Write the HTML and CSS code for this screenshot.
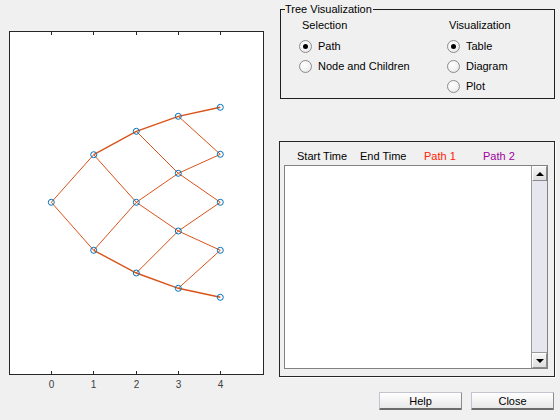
FILE: index.html
```html
<!DOCTYPE html>
<html>
<head>
<meta charset="utf-8">
<link rel="stylesheet" href="styles.css">
</head>
<body>
<div class="app">
  <div class="plot">
    <svg width="279" height="420" viewBox="0 0 279 420">
      <rect x="9.5" y="31.5" width="254" height="343" fill="#ffffff" stroke="#262626" stroke-width="1"/>
      <g stroke="#262626" stroke-width="1">
        <line x1="51.5" y1="31.5" x2="51.5" y2="35"/>
        <line x1="93.5" y1="31.5" x2="93.5" y2="35"/>
        <line x1="136.5" y1="31.5" x2="136.5" y2="35"/>
        <line x1="178.5" y1="31.5" x2="178.5" y2="35"/>
        <line x1="220.5" y1="31.5" x2="220.5" y2="35"/>
        <line x1="51.5" y1="374.5" x2="51.5" y2="371"/>
        <line x1="93.5" y1="374.5" x2="93.5" y2="371"/>
        <line x1="136.5" y1="374.5" x2="136.5" y2="371"/>
        <line x1="178.5" y1="374.5" x2="178.5" y2="371"/>
        <line x1="220.5" y1="374.5" x2="220.5" y2="371"/>
      </g>
      <g class="ticklabels">
        <text x="51.5" y="388">0</text>
        <text x="93.5" y="388">1</text>
        <text x="136.5" y="388">2</text>
        <text x="178.5" y="388">3</text>
        <text x="220.5" y="388">4</text>
      </g>
      <g fill="none" stroke="#D95319" stroke-width="1">
        <line x1="51.3" y1="202.3" x2="93.7" y2="154.7"/>
        <line x1="51.3" y1="202.3" x2="93.7" y2="250.3"/>
        <line x1="93.7" y1="154.7" x2="136.3" y2="202.3"/>
        <line x1="93.7" y1="250.3" x2="136.3" y2="202.3"/>
        <line x1="136.3" y1="131.3" x2="178.3" y2="173.3"/>
        <line x1="136.3" y1="202.3" x2="178.3" y2="173.3"/>
        <line x1="136.3" y1="202.3" x2="178.3" y2="231"/>
        <line x1="136.3" y1="273" x2="178.3" y2="231"/>
        <line x1="178.3" y1="116.3" x2="220.3" y2="154.3"/>
        <line x1="178.3" y1="173.3" x2="220.3" y2="154.3"/>
        <line x1="178.3" y1="173.3" x2="220.3" y2="202.3"/>
        <line x1="178.3" y1="231" x2="220.3" y2="202.3"/>
        <line x1="178.3" y1="231" x2="220.3" y2="250.3"/>
        <line x1="178.3" y1="288.3" x2="220.3" y2="250.3"/>
      </g>
      <g fill="none" stroke="#D95319" stroke-width="1.4">
        <polyline points="93.7,154.7 136.3,131.3 178.3,116.3 220.3,107.3"/>
        <polyline points="93.7,250.3 136.3,273 178.3,288.3 220.3,297.3"/>
      </g>
      <g fill="none" stroke="#0072BD" stroke-width="1">
        <circle cx="51.3" cy="202.3" r="3"/>
        <circle cx="93.7" cy="154.7" r="3"/>
        <circle cx="93.7" cy="250.3" r="3"/>
        <circle cx="136.3" cy="131.3" r="3"/>
        <circle cx="136.3" cy="202.3" r="3"/>
        <circle cx="136.3" cy="273" r="3"/>
        <circle cx="178.3" cy="116.3" r="3"/>
        <circle cx="178.3" cy="173.3" r="3"/>
        <circle cx="178.3" cy="231" r="3"/>
        <circle cx="178.3" cy="288.3" r="3"/>
        <circle cx="220.3" cy="107.3" r="3"/>
        <circle cx="220.3" cy="154.3" r="3"/>
        <circle cx="220.3" cy="202.3" r="3"/>
        <circle cx="220.3" cy="250.3" r="3"/>
        <circle cx="220.3" cy="297.3" r="3"/>
      </g>
    </svg>
  </div>
  <div class="side">
    <fieldset class="group">
      <legend>Tree Visualization</legend>
      <div class="cols">
        <div class="col col-sel">
          <div class="colhead">Selection</div>
          <div class="radio"><span class="dot on"></span>Path</div>
          <div class="radio"><span class="dot"></span>Node and Children</div>
        </div>
        <div class="col col-vis">
          <div class="colhead">Visualization</div>
          <div class="radio"><span class="dot on"></span>Table</div>
          <div class="radio"><span class="dot"></span>Diagram</div>
          <div class="radio"><span class="dot"></span>Plot</div>
        </div>
      </div>
    </fieldset>
    <div class="panel">
      <div class="thead">
        <span>Start Time</span>
        <span>End Time</span>
        <span class="p1">Path 1</span>
        <span class="p2">Path 2</span>
      </div>
      <div class="list">
        <div class="list-body"></div>
        <div class="scroll">
          <div class="sbtn"><span class="arr up"></span></div>
          <div class="track"></div>
          <div class="sbtn"><span class="arr down"></span></div>
        </div>
      </div>
    </div>
    <div class="buttons">
      <button class="btn">Help</button>
      <button class="btn">Close</button>
    </div>
  </div>
</div>
</body>
</html>
```
FILE: styles.css
```css
html, body {
  margin: 0;
  padding: 0;
  background: #f0f0f0;
}
body {
  font-family: "Liberation Sans", Arial, sans-serif;
  font-size: 11px;
  color: #000;
}
.app {
  display: flex;
  width: 560px;
  height: 420px;
}
.plot {
  width: 279px;
  flex: none;
}
.plot svg {
  display: block;
}
.ticklabels text {
  font-family: "Liberation Sans", Arial, sans-serif;
  font-size: 10px;
  fill: #404040;
  text-anchor: middle;
}
.side {
  width: 276px;
  display: flex;
  flex-direction: column;
}
.group {
  margin: 3px 0 0 1px;
  padding: 0 0 2px 0;
  border: 1px solid #1e1e1e;
  box-sizing: border-box;
  width: 275px;
  min-width: 0;
}
.group legend {
  margin-left: 4px;
  padding: 0 1px 0 0;
  line-height: 13px;
  font-size: 11px;
}
.cols {
  display: flex;
  padding-top: 3px;
}
.col-sel {
  width: 166px;
  padding-left: 18px;
  box-sizing: border-box;
}
.colhead {
  line-height: 13px;
  padding-left: 3px;
  margin-bottom: 4px;
}
.col-vis .colhead {
  padding-left: 2px;
}
.radio {
  height: 20px;
  display: flex;
  align-items: center;
  line-height: 13px;
}
.dot {
  width: 11px;
  height: 11px;
  border-radius: 50%;
  border: 1px solid #8c8c8c;
  background: radial-gradient(circle at 40% 35%, #ffffff 0%, #f4f4f4 50%, #dcdcdc 100%);
  margin-right: 6px;
  position: relative;
  flex: none;
}
.dot.on::after {
  content: "";
  position: absolute;
  left: 3px;
  top: 3px;
  width: 5px;
  height: 5px;
  border-radius: 50%;
  background: #000;
}
.panel {
  margin-top: 42px;
  border: 1px solid #262626;
  box-shadow: 1px 1px 0 #ffffff;
  height: 236px;
  box-sizing: border-box;
  display: flex;
  flex-direction: column;
}
.thead {
  display: grid;
  grid-template-columns: 63px 64px 59px auto;
  padding: 8px 0 2px 17px;
  line-height: 13px;
  white-space: nowrap;
}
.p1 { color: #ff2200; }
.p2 { color: #a000a0; }
.list {
  margin: 0 6px 0 4px;
  height: 204px;
  border: 1px solid #828282;
  background: #ffffff;
  display: flex;
  box-sizing: border-box;
}
.list-body {
  flex: 1;
}
.scroll {
  width: 15px;
  border-left: 1px solid #9a9a9a;
  display: flex;
  flex-direction: column;
  background: #e6e6ee;
}
.sbtn {
  height: 15px;
  flex: none;
  box-sizing: border-box;
  border-top: 1px solid #ffffff;
  border-left: 1px solid #ffffff;
  border-bottom: 1px solid #8a8a8a;
  border-right: 1px solid #8a8a8a;
  background: linear-gradient(#f6f6f6, #dedede);
  display: flex;
  align-items: center;
  justify-content: center;
}
.track {
  flex: 1;
  background: #e6e6ee;
  border-bottom: 1px solid #9a9a9a;
}
.arr {
  width: 0;
  height: 0;
  border-left: 4px solid transparent;
  border-right: 4px solid transparent;
}
.arr.up { border-bottom: 4px solid #000; }
.arr.down { border-top: 4px solid #000; }
.buttons {
  display: flex;
  gap: 9px;
  margin-top: 15px;
  padding-left: 100px;
}
.btn {
  width: 83px;
  height: 18px;
  padding: 0;
  font-family: "Liberation Sans", Arial, sans-serif;
  font-size: 11px;
  color: #000;
  border: 1px solid #c4c4d0;
  border-bottom: 2px solid #6c6c6c;
  border-right: 1px solid #8c8c8c;
  background: linear-gradient(#ffffff, #e8e8e8);
  border-radius: 1px;
  box-sizing: border-box;
}
```
